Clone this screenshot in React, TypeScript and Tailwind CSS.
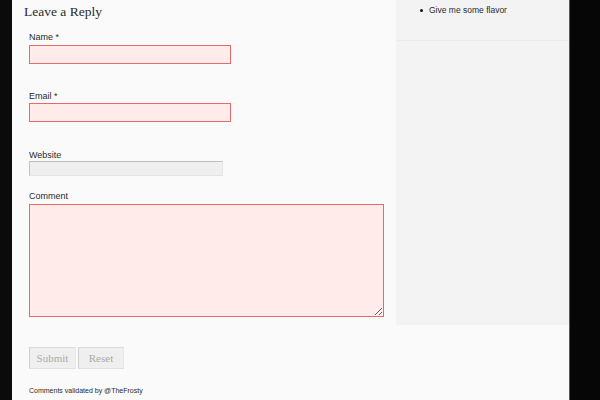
import React from 'react';

const sans = { fontFamily: '"Liberation Sans", Arial, sans-serif' };

export default function App() {
  return (
    <div className="flex h-[400px] w-[600px] overflow-hidden bg-[#070707]">
      {/* left page edge */}
      <div className="w-[12px] shrink-0 bg-[#0b0b0b]" />

      <div className="flex w-[557px] shrink-0 items-start bg-[#fafafa]">
        {/* main column */}
        <div className="w-[384px] shrink-0 pl-[12px]">
          <h3 className="mt-[3px] text-[13.5px] leading-[18px] text-[#2b2b2b] font-['Liberation_Serif',Georgia,serif]">
            Leave a Reply
          </h3>

          <form className="pl-[5px]" style={sans} onSubmit={(e) => e.preventDefault()}>
            <div className="mt-[10px]">
              <label className="block text-[9px] leading-[12px] text-[#2b2b2b]">Name *</label>
              <input className="mt-[2px] block h-[19px] w-[202px] border border-[#e36b6b] bg-[#ffecea] outline-none" />
            </div>

            <div className="mt-[26px]">
              <label className="block text-[9px] leading-[12px] text-[#2b2b2b]">Email *</label>
              <input className="mt-[1px] block h-[19px] w-[202px] border border-[#e36b6b] bg-[#ffecea] outline-none" />
            </div>

            <div className="mt-[27px]">
              <label className="block text-[9px] leading-[12px] text-[#2b2b2b]">Website</label>
              <input className="mt-[0px] block h-[15px] w-[194px] border border-t-[#bdbdbd] border-l-[#c4c4c4] border-r-[#e4e4e4] border-b-[#e4e4e4] bg-[#efefef] outline-none" />
            </div>

            <div className="mt-[14px]">
              <label className="block text-[9px] leading-[12px] text-[#2b2b2b]">Comment</label>
              <textarea className="mt-[2px] block h-[113px] w-[355px] border border-[#e36b6b] bg-[#ffecea] outline-none" />
            </div>

            <div className="mt-[30px] flex gap-[2px]">
              <button className="h-[22px] w-[47px] border border-t-[#dcdcdc] border-l-[#cfcfcf] border-r-[#e8e8e8] border-b-[#e0e0e0] bg-[#efefef] text-[11px] text-[#ababab] font-['Liberation_Serif',Georgia,serif]">
                Submit
              </button>
              <button className="h-[22px] w-[46px] border border-t-[#dcdcdc] border-l-[#cfcfcf] border-r-[#e8e8e8] border-b-[#e0e0e0] bg-[#efefef] text-[11px] text-[#ababab] font-['Liberation_Serif',Georgia,serif]">
                Reset
              </button>
            </div>

            <p className="mt-[17px] text-[7px] leading-[9px] text-[#2b2b2b]">
              Comments validated by @TheFrosty
            </p>
          </form>
        </div>

        {/* sidebar */}
        <aside className="h-[325px] w-[173px] shrink-0 bg-[#f3f3f3]" style={sans}>
          <div className="h-[41px] overflow-hidden border-b border-[#ececec]">
            <ul className="-mt-[11px] space-y-[3px] pl-[24px] text-[8.5px] leading-[12px] text-[#2b2b2b]">
              <li className="flex items-center gap-[6px]">
                <span className="h-[3px] w-[3px] rounded-full bg-[#111]" />
                Ask me a question
              </li>
              <li className="flex items-center gap-[6px]">
                <span className="h-[3px] w-[3px] rounded-full bg-[#111]" />
                Give me some flavor
              </li>
            </ul>
          </div>
        </aside>
      </div>

      {/* right page edge */}
      <div className="w-[31px] shrink-0 border-l border-[#5a5a5a] bg-[#060606]" />
    </div>
  );
}
